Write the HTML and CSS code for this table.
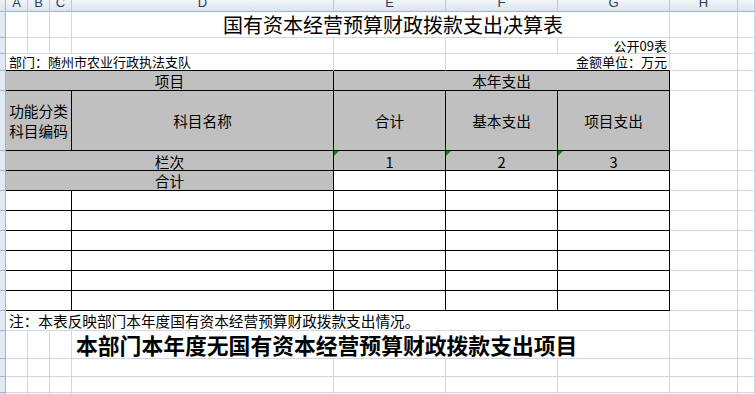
FILE: index.html
```html
<!DOCTYPE html>
<html lang="zh-CN">
<head>
<meta charset="utf-8">
<title>国有资本经营预算财政拨款支出决算表</title>
<link rel="stylesheet" href="styles.css">
</head>
<body>
<div class="sheet">
  <!-- column header row -->
  <div class="corner"></div>
  <div class="ch"><span>A</span></div>
  <div class="ch"><span>B</span></div>
  <div class="ch"><span>C</span></div>
  <div class="ch"><span>D</span></div>
  <div class="ch"><span>E</span></div>
  <div class="ch"><span>F</span></div>
  <div class="ch"><span>G</span></div>
  <div class="ch"><span>H</span></div>
  <div class="ch"></div>

  <!-- row 1: title -->
  <div class="rh"></div>
  <div class="c"></div><div class="c"></div><div class="c"></div>
  <div class="c span4 title">国有资本经营预算财政拨款支出决算表</div>
  <div class="c"></div><div class="c"></div>

  <!-- row 2 -->
  <div class="rh"></div>
  <div class="c"></div><div class="c"></div><div class="c"></div><div class="c"></div>
  <div class="c"></div><div class="c"></div>
  <div class="c small right">公开09表</div>
  <div class="c"></div><div class="c"></div>

  <!-- row 3 -->
  <div class="rh"></div>
  <div class="c top span4 small left">部门：随州市农业行政执法支队</div>
  <div class="c top"></div>
  <div class="c top span2 small right">金额单位：万元</div>
  <div class="c"></div><div class="c"></div>

  <!-- row 4 -->
  <div class="rh"></div>
  <div class="t g span4">项目</div>
  <div class="t g span3">本年支出</div>
  <div class="c"></div><div class="c"></div>

  <!-- row 5 -->
  <div class="rh"></div>
  <div class="t g span3 two">功能分类<br>科目编码</div>
  <div class="t g">科目名称</div>
  <div class="t g">合计</div>
  <div class="t g">基本支出</div>
  <div class="t g">项目支出</div>
  <div class="c"></div><div class="c"></div>

  <!-- row 6 -->
  <div class="rh"></div>
  <div class="t g span4 low">栏次</div>
  <div class="t g mark low">1</div>
  <div class="t g mark low">2</div>
  <div class="t g mark low">3</div>
  <div class="c"></div><div class="c"></div>

  <!-- row 7 -->
  <div class="rh"></div>
  <div class="t g span4">合计</div>
  <div class="t"></div><div class="t"></div><div class="t"></div>
  <div class="c"></div><div class="c"></div>

  <!-- rows 8-13 -->
  <div class="rh"></div><div class="t span3"></div><div class="t"></div><div class="t"></div><div class="t"></div><div class="t"></div><div class="c"></div><div class="c"></div>
  <div class="rh"></div><div class="t span3"></div><div class="t"></div><div class="t"></div><div class="t"></div><div class="t"></div><div class="c"></div><div class="c"></div>
  <div class="rh"></div><div class="t span3"></div><div class="t"></div><div class="t"></div><div class="t"></div><div class="t"></div><div class="c"></div><div class="c"></div>
  <div class="rh"></div><div class="t span3"></div><div class="t"></div><div class="t"></div><div class="t"></div><div class="t"></div><div class="c"></div><div class="c"></div>
  <div class="rh"></div><div class="t span3"></div><div class="t"></div><div class="t"></div><div class="t"></div><div class="t"></div><div class="c"></div><div class="c"></div>
  <div class="rh"></div><div class="t span3"></div><div class="t"></div><div class="t"></div><div class="t"></div><div class="t"></div><div class="c"></div><div class="c"></div>

  <!-- row 14: note -->
  <div class="rh"></div>
  <div class="c span7 note">注：本表反映部门本年度国有资本经营预算财政拨款支出情况。</div>
  <div class="c"></div><div class="c"></div>

  <!-- row 15: bold statement -->
  <div class="rh"></div>
  <div class="c"></div><div class="c"></div><div class="c"></div>
  <div class="c span4 bold">本部门本年度无国有资本经营预算财政拨款支出项目</div>
  <div class="c"></div><div class="c"></div>

  <!-- rows 16-18 -->
  <div class="rh"></div><div class="c"></div><div class="c"></div><div class="c"></div><div class="c"></div><div class="c"></div><div class="c"></div><div class="c"></div><div class="c"></div><div class="c"></div>
  <div class="rh"></div><div class="c"></div><div class="c"></div><div class="c"></div><div class="c"></div><div class="c"></div><div class="c"></div><div class="c"></div><div class="c"></div><div class="c"></div>
  <div class="rh"></div><div class="c"></div><div class="c"></div><div class="c"></div><div class="c"></div><div class="c"></div><div class="c"></div><div class="c"></div><div class="c"></div><div class="c"></div>
</div>
</body>
</html>
```

FILE: styles.css
```css
* {
  box-sizing: border-box;
}

html, body {
  margin: 0;
  padding: 0;
  background: #ffffff;
  overflow: hidden;
}

body {
  width: 755px;
  height: 394px;
  font-family: "Noto Sans CJK SC", "Liberation Sans", sans-serif;
  color: #000;
}

.sheet {
  display: grid;
  grid-template-columns: 6px 22px 22px 22px 262px 112px 112px 112px 68px 17px;
  grid-template-rows: 12px 26px 16px 17px 20px 60px 20px 20px repeat(6, 20px) 20px 28px 18px 16px 2px;
  width: 755px;
  height: 394px;
  overflow: hidden;
}

.sheet > div {
  min-width: 0;
  display: flex;
  align-items: center;
  justify-content: center;
  white-space: nowrap;
  overflow: hidden;
}

/* column headers */
.corner {
  background: linear-gradient(#eef2f8, #dbe3ee);
  border-right: 1px solid #9eb6ce;
  border-bottom: 1px solid #9eb6ce;
}

.ch {
  background: linear-gradient(#f4f7fb, #dbe3ee);
  border-right: 1px solid #bccbdc;
  border-bottom: 1px solid #9eb6ce;
}

.sheet > .ch {
  align-items: flex-end;
}

.ch span {
  font-family: "Liberation Sans", sans-serif;
  font-size: 13px;
  line-height: 13px;
  margin-bottom: 2px;
  color: #27415f;
}

/* row headers */
.rh {
  background: #e1e9f5;
  border-right: 1px solid #9eb6ce;
  border-bottom: 1px solid #9eb6ce;
}

/* plain cells with gridlines */
.c {
  border-right: 1px solid #d0d7e5;
  border-bottom: 1px solid #d0d7e5;
}

.c.top {
  border-bottom-color: #000;
}

/* table cells with black borders */
.t {
  border-right: 1px solid #000;
  border-bottom: 1px solid #000;
  font-size: 14.67px;
  line-height: 20px;
}

.g {
  background: #c0c0c0;
}

.span2 { grid-column: span 2; }
.span3 { grid-column: span 3; }
.span4 { grid-column: span 4; }
.span7 { grid-column: span 7; }

.title {
  font-size: 20px;
  line-height: 24px;
  padding-left: 151px;
}

.sheet > .title {
  justify-content: flex-start;
}

.small {
  font-size: 13px;
  line-height: 14px;
}

.sheet > .right {
  justify-content: flex-end;
  padding-right: 2px;
}

.sheet > .left {
  justify-content: flex-start;
  padding-left: 3px;
}

.sheet > .two {
  white-space: normal;
  text-align: center;
}

.sheet > .low {
  padding-top: 2px;
}

.mark {
  position: relative;
}

.mark::before {
  content: "";
  position: absolute;
  top: 0;
  left: 0;
  border-top: 5px solid #0b8a0b;
  border-right: 5px solid transparent;
}

.sheet > .note {
  justify-content: flex-start;
  padding-left: 3px;
  font-size: 14.67px;
  line-height: 18px;
}

.sheet > .bold {
  justify-content: flex-start;
  padding-left: 4px;
  font-size: 21.8px;
  line-height: 26px;
  font-weight: bold;
}
```
